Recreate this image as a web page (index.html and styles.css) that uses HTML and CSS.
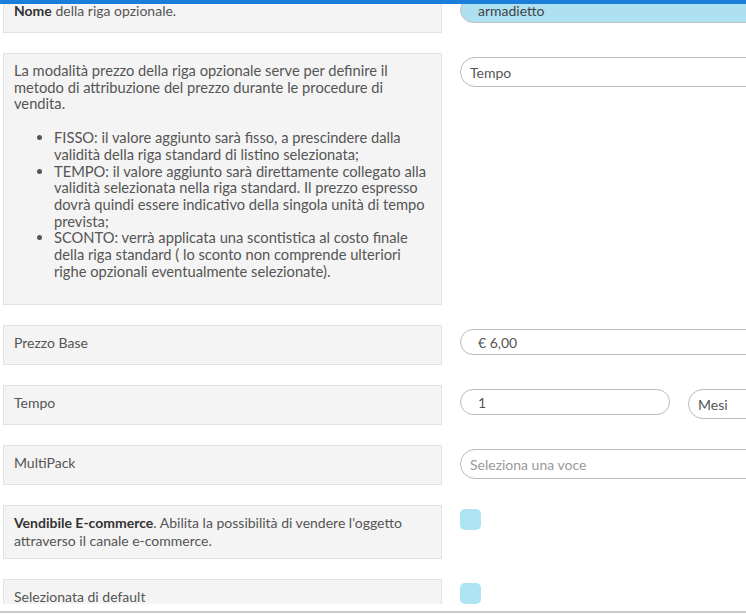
FILE: index.html
```html
<!DOCTYPE html>
<html lang="it">
<head>
  <meta charset="UTF-8" />
  <title>Riga opzionale</title>
  <link rel="stylesheet" href="styles.css">
</head>
<body>

  <div class="barra-top"></div>

  <main class="vista">
    <form class="scheda" autocomplete="off">

      <div class="riga">
        <div class="etichetta"><strong>Nome</strong> della riga opzionale.</div>
        <div class="campo">
          <input type="text" class="testo evidenziato" value="armadietto" />
        </div>
      </div>

      <div class="riga">
        <div class="etichetta descrizione">
          <p>La modalità prezzo della riga opzionale serve per definire il metodo di attribuzione del prezzo durante le procedure di vendita.</p>
          <ul>
            <li>FISSO: il valore aggiunto sarà fisso, a prescindere dalla validità della riga standard di listino selezionata;</li>
            <li>TEMPO: il valore aggiunto sarà direttamente collegato alla validità selezionata nella riga standard. Il prezzo espresso dovrà quindi essere indicativo della singola unità di tempo prevista;</li>
            <li>SCONTO: verrà applicata una scontistica al costo finale della riga standard ( lo sconto non comprende ulteriori righe opzionali eventualmente selezionate).</li>
          </ul>
        </div>
        <div class="campo">
          <select class="scelta">
            <option>Tempo</option>
            <option>Fisso</option>
            <option>Sconto</option>
          </select>
        </div>
      </div>

      <div class="riga">
        <div class="etichetta">Prezzo Base</div>
        <div class="campo">
          <input type="text" class="testo" value="€ 6,00" />
        </div>
      </div>

      <div class="riga">
        <div class="etichetta">Tempo</div>
        <div class="campo">
          <input type="text" class="testo corto" value="1" />
          <select class="scelta">
            <option>Mesi</option>
            <option>Giorni</option>
            <option>Anni</option>
          </select>
        </div>
      </div>

      <div class="riga">
        <div class="etichetta">MultiPack</div>
        <div class="campo">
          <select class="scelta vuota">
            <option>Seleziona una voce</option>
          </select>
        </div>
      </div>

      <div class="riga">
        <div class="etichetta"><strong>Vendibile E-commerce</strong>. Abilita la possibilità di vendere l'oggetto attraverso il canale e-commerce.</div>
        <div class="campo">
          <span class="spunta"></span>
        </div>
      </div>

      <div class="riga">
        <div class="etichetta">Selezionata di default</div>
        <div class="campo">
          <span class="spunta"></span>
        </div>
      </div>

    </form>
  </main>

  <footer class="piede"></footer>

</body>
</html>
```

FILE: styles.css
```css
/* Reset */
* {
  box-sizing: border-box;
}
body {
  margin: 0;
  font-family: Lato, 'Open Sans', sans-serif;
  font-size: 14px;
  color: #555;
  background: white;
  overflow: hidden;
}

.barra-top {
  height: 4px;
  background: #1a7fdb;
}

.vista {
  height: 600px;
  overflow: hidden;
}

.scheda {
  display: flex;
  flex-direction: column;
  gap: 20px;
  margin-top: -11px;
  padding-left: 3px;
}

.riga {
  display: flex;
  align-items: flex-start;
  gap: 18px;
}

.etichetta {
  flex: 0 0 439px;
  min-height: 40px;
  padding: 8px 10px;
  line-height: 18px;
  background: #f4f4f4;
  border: 1px solid #e2e2e2;
}
.etichetta strong {
  color: #333;
}

.descrizione {
  font-size: 14.7px;
  line-height: 16.7px;
}
.descrizione p {
  margin: 0;
}
.descrizione ul {
  margin: 17px 0;
  padding-left: 40px;
}

.campo {
  display: flex;
  gap: 18px;
  padding-top: 4px;
}

.testo {
  width: 400px;
  height: 26px;
  padding: 0 17px;
  font-family: inherit;
  font-size: 14px;
  color: #555;
  border: 1px solid #bbb;
  border-radius: 13px;
  outline: none;
}
.testo.corto {
  width: 210px;
}
.testo.evidenziato {
  background: #ade0f1;
  border-color: #c4c4c4;
  color: #444;
}

.scelta {
  appearance: none;
  width: 400px;
  height: 30px;
  padding: 0 9px;
  font-family: inherit;
  font-size: 14px;
  color: #555;
  background: white;
  border: 1px solid #bbb;
  border-radius: 15px;
  outline: none;
}
.scelta.vuota {
  color: #999;
}

.spunta {
  display: block;
  width: 21px;
  height: 21px;
  border-radius: 5px;
  background: #ade4f4;
}

.piede {
  margin-top: 7px;
  height: 3px;
  border-top: 2px solid #c8c8c8;
}
```
